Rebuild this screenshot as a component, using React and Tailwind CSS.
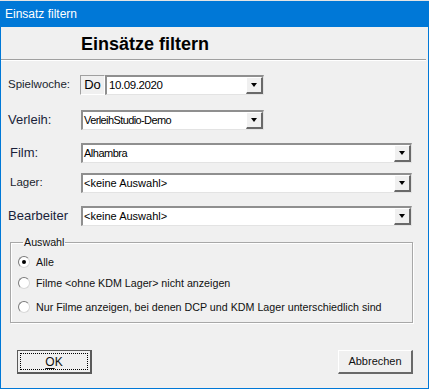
function DropButton() {
  return (
    <div className="flex h-full w-[17px] shrink-0 items-center justify-center border-t border-l border-t-white border-l-white border-b-2 border-r-2 border-b-[#696969] border-r-[#696969] bg-[#f0f0f0]">
      <div className="h-0 w-0 border-x-[3.5px] border-t-[4px] border-x-transparent border-t-black" />
    </div>
  );
}

function Combo({ width, text, textClass }) {
  return (
    <div
      className={`flex h-[20px] shrink-0 border-t-2 border-l-2 border-t-[#8f8f8f] border-l-[#8f8f8f] border-b border-r border-b-[#e3e3e3] border-r-[#e3e3e3] bg-white ${width}`}
    >
      <div className={`flex flex-1 items-center pl-[1px] text-black ${textClass}`}>
        {text}
      </div>
      <DropButton />
    </div>
  );
}

function Radio({ checked, label, className }) {
  return (
    <div className={`flex h-[16px] items-center ${className}`}>
      <div className="flex h-[12px] w-[12px] items-center justify-center rounded-full border border-t-[#7a7a7a] border-l-[#7a7a7a] border-b-[#d8d8d8] border-r-[#d8d8d8] bg-white">
        {checked && <div className="h-[4px] w-[4px] rounded-full bg-black" />}
      </div>
      <span className="ml-[6px] text-[10.7px] text-[#111]">{label}</span>
    </div>
  );
}

export default function App() {
  return (
    <div
      className="flex h-[389px] w-[429px] flex-col border-t border-t-[#e4e4e4] bg-[#f0f0f0]"
      style={{ fontFamily: '"Liberation Sans", Arial, sans-serif' }}
    >
      <div className="flex h-[26px] shrink-0 items-center bg-[#0078d7] pl-[5px] text-[12px] text-white">
        Einsatz filtern
      </div>

      <div className="flex flex-1 flex-col border-x border-b border-[#0078d7]">
        <div className="flex h-[32px] shrink-0 items-center pl-[80px] pt-[3px] text-[18px] font-bold text-black">
          Einsätze filtern
        </div>
        <div className="mr-[2px] border-t border-b border-t-[#a0a0a0] border-b-white" />

        <div className="flex flex-col pl-[7px]">
          <div className="mt-[14px] flex h-[20px] items-center">
            <div className="w-[72px] text-[11.5px] text-[#1a1f2e]">Spielwoche:</div>
            <div className="flex h-[20px] w-[25px] items-center justify-center border-t border-l border-t-[#a0a0a0] border-l-[#a0a0a0] border-b border-r border-b-white border-r-white text-[13px] text-black">
              Do
            </div>
            <Combo width="w-[159px]" text="10.09.2020" textClass="pl-[2px] text-[11.5px] tracking-[-0.4px]" />
          </div>

          <div className="mt-[15px] flex h-[20px] items-center">
            <div className="w-[73px] text-[13px] text-[#1a1f3a]">Verleih:</div>
            <Combo width="w-[183px]" text="VerleihStudio-Demo" textClass="text-[11px] tracking-[-0.6px]" />
          </div>

          <div className="mt-[13px] flex h-[20px] items-center">
            <div className="w-[73px] pl-[2px] text-[13px] text-[#1a1f3a]">Film:</div>
            <Combo width="w-[331px]" text="Alhambra" textClass="text-[11px] tracking-[-0.5px]" />
          </div>

          <div className="mt-[10px] flex h-[20px] items-center">
            <div className="w-[73px] pl-[2px] text-[11.5px] text-[#1a1f2e]">Lager:</div>
            <Combo width="w-[331px]" text="<keine Auswahl>" textClass="text-[11px]" />
          </div>

          <div className="mt-[13px] flex h-[20px] items-center">
            <div className="w-[73px] text-[13px] text-[#1a1f3a]">Bearbeiter</div>
            <Combo width="w-[331px]" text="<keine Auswahl>" textClass="text-[11px]" />
          </div>

          <fieldset className="ml-[2px] mt-[10px] h-[87px] w-[403px] border border-[#a8a8a8] pl-[7px] shadow-[inset_1px_1px_0_#ffffff,1px_1px_0_#ffffff]">
            <legend className="ml-[5px] px-[1px] text-[10.7px] leading-[13px] text-[#111]">
              Auswahl
            </legend>
            <Radio checked className="mt-[5px]" label="Alle" />
            <Radio className="mt-[5px]" label="Filme <ohne KDM Lager> nicht anzeigen" />
            <Radio
              className="mt-[8px]"
              label="Nur Filme anzeigen, bei denen DCP und KDM Lager  unterschiedlich sind"
            />
          </fieldset>

          <div className="mt-[27px] flex">
            <button className="ml-[9px] flex h-[24px] w-[75px] items-center justify-center border border-[#5a5a5a] border-b-2 border-r-2 bg-[#f0f0f0] p-[2px]">
              <div className="flex h-full w-full items-center justify-center border border-dotted border-black text-[12px] text-[#111]">
                <span className="underline underline-offset-2">O</span>K
              </div>
            </button>
            <button className="ml-[246px] flex h-[24px] w-[75px] items-center justify-center border-t border-l border-t-white border-l-white border-b-2 border-r-2 border-b-[#696969] border-r-[#696969] bg-[#f0f0f0] text-[11px] text-[#111]">
              Abbrechen
            </button>
          </div>
        </div>
      </div>
    </div>
  );
}
